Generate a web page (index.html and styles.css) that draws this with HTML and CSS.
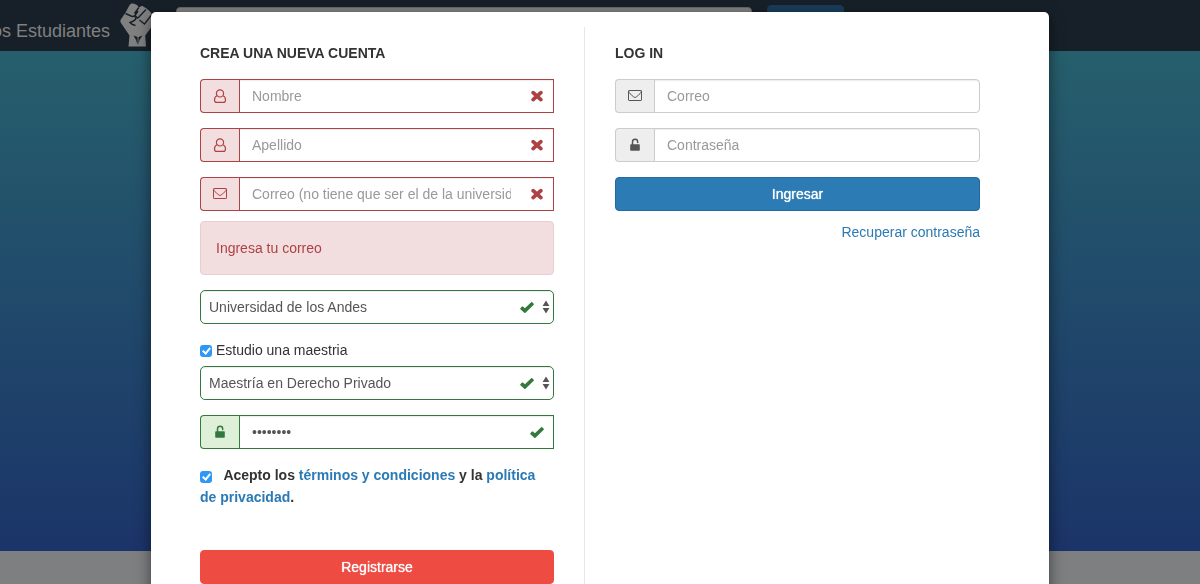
FILE: index.html
```html
<!DOCTYPE html>
<html lang="es">
<head>
<meta charset="utf-8">
<meta name="viewport" content="width=device-width, initial-scale=1">
<title>Los Estudiantes</title>
<link rel="stylesheet" href="styles.css">
</head>
<body>
<svg class="sprite" aria-hidden="true">
  <symbol id="i-user" viewBox="0 0 14 14"><path d="M4 6.700C2 7.300 1.500 8.900 1.500 10.900c0 1.500.9 2.500 2.100 2.500h6.800c1.200 0 2.100-1 2.100-2.500 0-2-.5-3.600-2.500-4.200" fill="none" stroke="currentColor" stroke-width="1.200"/><circle cx="7" cy="4.400" r="3.600" fill="none" stroke="currentColor" stroke-width="1.200"/></symbol>
  <symbol id="i-mail" viewBox="0 0 14 14"><rect x=".5" y="1.500" width="13" height="10" rx=".6" fill="none" stroke="currentColor"/><path d="M.8 2.200C1 4.200 2.300 4.900 5.200 7.500c1.500 1.300 2.100 1.300 3.600 0C11.700 4.900 13 4.200 13.200 2.200" fill="none" stroke="currentColor"/></symbol>
  <symbol id="i-lock" viewBox="0 0 14 14"><rect x="2.200" y="6.200" width="9.600" height="6.500" rx=".8" fill="currentColor"/><path d="M4.500 6.700V3.900a2.600 2.600 0 0 1 5.200 0v.6" fill="none" stroke="currentColor" stroke-width="1.500" stroke-linecap="round"/></symbol>
  <symbol id="i-cross" viewBox="0 0 14 14"><path d="M3.100 3.700l7.800 6.900M10.900 3.700l-7.800 6.900" fill="none" stroke="currentColor" stroke-width="3.800" stroke-linecap="round"/></symbol>
  <symbol id="i-check" viewBox="0 0 14 14"><path d="M.4 8.300l1.500-1.700c.3-.3.7-.3 1 0l2 1.600 6.300-6c.3-.3.7-.3 1 0l1.500 1.600c.3.3.3.6 0 .9l-8.200 8c-.4.4-.8.4-1.200 0L.4 9.200c-.3-.3-.3-.6 0-.9z" fill="currentColor"/></symbol>
  <symbol id="i-sort" viewBox="0 0 8 14"><path d="M4 .6l3.400 5.400H.6zM4 13.400L.6 8h6.800z" fill="currentColor"/></symbol>
</svg>

<header class="topbar">
  <a class="brand" href="#">Los Estudiantes</a>
  <svg class="fist" viewBox="0 0 34 44" aria-hidden="true">
    <path d="M8.500 43.500L9.500 32.500 1 20C.2 18.800.2 17.600.8 16.500L5.600 9.500 9.600 2C10.500.4 12 .1 13.500.6L17 2 19 4.500 22 2.700 26.500 5.500 30 8.500 33 13 33 21 30 26 25.200 32.500 26 43.500z" fill="currentColor"/>
    <path d="M5.500 10.500L12 13.500c2.500-.5 4 0 4 1.500-.5 2.500-3 3.500-6 4.500 1.500 2 3 2.700 5.500 3M18.800 4.500L14.500 10.500M26 6.500L18 15M18 8l-3 4.500 3 3M31.500 12L24.500 21l-5-4" fill="none" stroke="#172028" stroke-width="1.400"/>
    <path d="M13.500 32.500l4 1.500.2 8-1.700-5zM22.500 32.500l-4 1.500-.2 8 1.200-5z" fill="#172028"/>
  </svg>
  <input class="search" type="search" aria-label="Buscar">
  <button class="search-button" type="button" aria-label="Buscar"></button>
</header>
<div class="hero"></div>

<div class="overlay">
  <div class="modal" role="dialog" aria-modal="true" aria-label="Cuenta">
    <form class="signup">
      <h2 class="title">CREA UNA NUEVA CUENTA</h2>
      <div class="field is-error">
        <label class="addon" for="nombre"><svg class="icon"><use href="#i-user"/></svg></label>
        <input class="control" id="nombre" type="text" placeholder="Nombre" aria-label="Nombre">
        <svg class="mark"><use href="#i-cross"/></svg>
      </div>
      <div class="field is-error">
        <label class="addon" for="apellido"><svg class="icon"><use href="#i-user"/></svg></label>
        <input class="control" id="apellido" type="text" placeholder="Apellido" aria-label="Apellido">
        <svg class="mark"><use href="#i-cross"/></svg>
      </div>
      <div class="field is-error">
        <label class="addon" for="correo"><svg class="icon"><use href="#i-mail"/></svg></label>
        <input class="control" id="correo" type="email" placeholder="Correo (no tiene que ser el de la universidad)" aria-label="Correo">
        <svg class="mark"><use href="#i-cross"/></svg>
      </div>
      <div class="alert" role="alert">Ingresa tu correo</div>
      <div class="field is-success">
        <select class="control dropdown" aria-label="Universidad"><option>Universidad de los Andes</option></select>
        <svg class="mark mark-select"><use href="#i-check"/></svg>
        <svg class="sort"><use href="#i-sort"/></svg>
      </div>
      <label class="check-row"><input class="check" type="checkbox" checked>Estudio una maestria</label>
      <div class="field is-success">
        <select class="control dropdown" aria-label="Maestría"><option>Maestría en Derecho Privado</option></select>
        <svg class="mark mark-select"><use href="#i-check"/></svg>
        <svg class="sort"><use href="#i-sort"/></svg>
      </div>
      <div class="field is-success">
        <label class="addon" for="clave"><svg class="icon"><use href="#i-lock"/></svg></label>
        <input class="control" id="clave" type="password" value="password" aria-label="Contraseña">
        <svg class="mark"><use href="#i-check"/></svg>
      </div>
      <div class="terms">
        <input class="check" id="terminos" type="checkbox" checked>
        <label for="terminos">Acepto los <a href="#">términos y condiciones</a> y la <a href="#">política de privacidad</a>.</label>
      </div>
      <button class="button button-red" type="button">Registrarse</button>
    </form>
    <form class="login">
      <h2 class="title">LOG IN</h2>
      <div class="field">
        <label class="addon" for="login-correo"><svg class="icon"><use href="#i-mail"/></svg></label>
        <input class="control rounded" id="login-correo" type="email" placeholder="Correo" aria-label="Correo">
      </div>
      <div class="field">
        <label class="addon" for="login-clave"><svg class="icon"><use href="#i-lock"/></svg></label>
        <input class="control rounded" id="login-clave" type="password" placeholder="Contraseña" aria-label="Contraseña">
      </div>
      <button class="button button-blue" type="button">Ingresar</button>
      <a class="recover" href="#">Recuperar contraseña</a>
    </form>
  </div>
</div>
</body>
</html>
```
FILE: styles.css
```css
*, *::after { box-sizing: border-box; }
body {
  margin: 0;
  height: 100vh;
  overflow: hidden;
  background: #7e7f80;
  color: #333;
  font: 14px/20px "Liberation Sans", Arial, sans-serif;
}
a { color: #2a7ab5; text-decoration: none; }
.sprite { display: none; }

.topbar {
  display: flex;
  align-items: flex-start;
  height: 51px;
  padding-top: 3px;
  background: #172028;
  color: #808080;
}
.brand {
  display: flex;
  justify-content: flex-end;
  width: 110px;
  padding-top: 17px;
  color: #808080;
  font-size: 18px;
  line-height: 22px;
  white-space: nowrap;
}
.fist { flex: none; width: 34px; height: 44px; margin-left: 10px; }
.search {
  width: 576px;
  height: 34px;
  margin: 4px 0 0 22px;
  border: 1px solid #666;
  border-radius: 4px;
  background: #808080;
}
.search-button {
  width: 77px;
  height: 34px;
  margin: 2px 0 0 15px;
  border: 1px solid #173c59;
  border-radius: 4px;
  background: #193d5b;
}
.hero { height: 500px; background: linear-gradient(#265f6c, #1b3469); }

.overlay {
  position: fixed;
  inset: 0;
  overflow: hidden;
  padding-top: 12px;
}
.modal {
  display: grid;
  grid-template-columns: 433fr 465fr;
  max-width: 898px;
  min-height: 100%;
  margin: 0 auto;
  padding: 15px 0;
  border-radius: 5px;
  background: #fff;
  box-shadow: 0 5px 15px rgba(0, 0, 0, .5), 0 0 1px rgba(0, 0, 0, .4);
}
.signup { padding: 16px 30px 40px 49px; }
.login { padding: 16px 69px 40px 30px; border-left: 1px solid #e5e8ec; }
.title { margin: 0 0 16px; font-size: 14px; line-height: 20px; }

.field {
  position: relative;
  display: flex;
  margin-bottom: 15px;
  --line: #ccc;
  --tone: #555;
  --fill: #eee;
}
.is-error { --line: #ae4144; --tone: #ae4144; --fill: #f2dede; }
.is-success { --line: #34783f; --tone: #34783f; --fill: #dff0d8; }
.addon {
  display: flex;
  flex: none;
  align-items: center;
  justify-content: center;
  width: 40px;
  padding-right: 1px;
  border: 1px solid var(--line);
  border-right: 0;
  border-radius: 4px 0 0 4px;
  background: var(--fill);
  color: var(--tone);
}
.addon + .control { margin-left: -1px; border-radius: 0; }
.addon + .rounded { border-radius: 0 4px 4px 0; }
.icon { width: 14px; height: 14px; }
.control {
  flex: 1;
  min-width: 0;
  height: 34px;
  padding: 0 12px;
  border: 1px solid var(--line);
  border-radius: 4px;
  background: #fff;
  box-shadow: inset 0 1px 1px rgba(0, 0, 0, .075);
  color: #555;
  font: inherit;
}
.is-error .control, .is-success .control { padding-right: 42px; }
.control::placeholder { color: #999; }
.dropdown { appearance: none; padding-left: 8px; border-radius: 5px; }
.mark {
  position: absolute;
  top: 10px;
  right: 10px;
  width: 14px;
  height: 14px;
  color: var(--tone);
  pointer-events: none;
}
.mark-select { right: 20px; }
.sort {
  position: absolute;
  top: 10px;
  right: 4px;
  width: 8px;
  height: 14px;
  color: #555;
  pointer-events: none;
}
.alert {
  margin: -5px 0 15px;
  padding: 16px 15px;
  border: 1px solid #ebccd1;
  border-radius: 4px;
  background: #f2dede;
  color: #ae4144;
}

.check {
  appearance: none;
  display: inline-grid;
  flex: none;
  place-items: center;
  width: 12px;
  height: 12px;
  margin: 0;
  border-radius: 3px;
  background: #ddd;
}
.check:checked { background: #2e97f7; }
.check:checked::after {
  content: "";
  width: 5px;
  height: 8px;
  margin-bottom: 2px;
  border: solid #fff;
  border-width: 0 2px 2px 0;
  transform: rotate(40deg);
}
.check-row {
  display: flex;
  align-items: center;
  gap: 4px;
  margin-bottom: 6px;
  padding-top: 1px;
}
.check-row .check { margin-top: 2px; }
.terms { font-weight: bold; line-height: 22px; margin-bottom: 42px; }
.terms .check { margin-right: 8px; }

.button {
  width: 100%;
  height: 34px;
  border: 1px solid #246a9e;
  border-radius: 4px;
  color: #fff;
  font: 14px/20px "Liberation Sans", Arial, sans-serif;
  text-shadow: 0 0 1px #fff;
}
.button-blue { background: #2c7bb4; }
.button-red { border-color: #ee4b43; background: #ee4b43; }
.recover { display: block; margin-top: 11px; text-align: right; }
```
